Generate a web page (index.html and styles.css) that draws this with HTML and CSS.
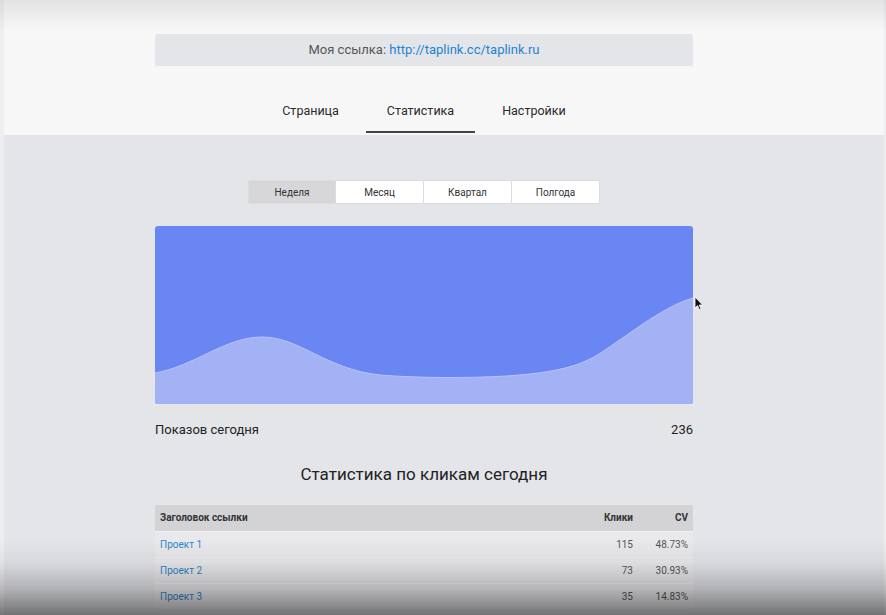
FILE: index.html
```html
<!DOCTYPE html>
<html lang="ru">
<head>
    <meta charset="UTF-8">
    <meta name="viewport" content="width=device-width, initial-scale=1.0">
    <title>Taplink — Статистика</title>
    <link rel="stylesheet" href="styles.css">
</head>
<body>
    <div class="page">
        <header class="top">
            <div class="container">
                <div class="my-link">Моя ссылка: <a href="#">http://taplink.cc/taplink.ru</a></div>
                <nav class="tabs">
                    <a class="tab" href="#">Страница</a>
                    <a class="tab active" href="#">Статистика</a>
                    <a class="tab" href="#">Настройки</a>
                </nav>
            </div>
        </header>

        <main class="stats">
            <div class="container">
                <div class="periods">
                    <button class="period active">Неделя</button>
                    <button class="period">Месяц</button>
                    <button class="period">Квартал</button>
                    <button class="period">Полгода</button>
                </div>

                <div class="chart">
                    <svg viewBox="0 0 538 178" preserveAspectRatio="none">
                        <path class="wave" d="M0,147 C40,140 70,111 107,111 C145,111 170,143 225,149 C260,152 330,153 375,148 C410,144 430,138 450,124 C480,104 510,80 538,72 L538,178 L0,178 Z"/>
                        <path class="wave-line" d="M0,147 C40,140 70,111 107,111 C145,111 170,143 225,149 C260,152 330,153 375,148 C410,144 430,138 450,124 C480,104 510,80 538,72"/>
                    </svg>
                </div>

                <div class="views">
                    <span>Показов сегодня</span>
                    <span>236</span>
                </div>

                <h2 class="clicks-title">Статистика по кликам сегодня</h2>

                <table class="clicks">
                    <thead>
                        <tr>
                            <th class="title">Заголовок ссылки</th>
                            <th class="num">Клики</th>
                            <th class="num cv">CV</th>
                        </tr>
                    </thead>
                    <tbody>
                        <tr>
                            <td><a href="#">Проект 1</a></td>
                            <td class="num">115</td>
                            <td class="num cv">48.73%</td>
                        </tr>
                        <tr>
                            <td><a href="#">Проект 2</a></td>
                            <td class="num">73</td>
                            <td class="num cv">30.93%</td>
                        </tr>
                        <tr>
                            <td><a href="#">Проект 3</a></td>
                            <td class="num">35</td>
                            <td class="num cv">14.83%</td>
                        </tr>
                    </tbody>
                </table>
            </div>
        </main>
    </div>

    <!-- mouse pointer -->
    <svg class="cursor" width="10" height="15" viewBox="0 0 10 15">
        <path d="M1,1 L1,12 L3.6,9.6 L5.4,13.8 L7,13.1 L5.3,9 L8.6,9 Z" fill="#111" stroke="#fff" stroke-width="0.8"/>
    </svg>

    <div class="shade-top"></div>
    <div class="shade-bottom"></div>
</body>
</html>
```

FILE: styles.css
```css
* {
    margin: 0;
    padding: 0;
    box-sizing: border-box;
}

body {
    font-family: Roboto, "Liberation Sans", Arial, sans-serif;
    background-color: #eeeef1;
    color: #333;
    width: 886px;
    height: 615px;
    overflow: hidden;
}

.page {
    margin: 0 2px 0 4px;
    min-height: 615px;
    background-color: #e4e5e9;
}

.container {
    width: 538px;
    margin-left: 151px;
}

/* header with link + tabs */
.top {
    background-color: #f7f7f7;
    padding-top: 34px;
    padding-bottom: 2px;
}

.my-link {
    height: 32px;
    line-height: 32px;
    background-color: #e4e5e9;
    border-radius: 2px;
    text-align: center;
    font-size: 13px;
    color: #555;
}

.my-link a {
    color: #1e84d2;
    text-decoration: none;
}

.tabs {
    display: flex;
    justify-content: center;
    gap: 6px;
    margin-top: 25px;
}

.tab {
    padding: 12px 21px;
    line-height: 16px;
    font-size: 12.5px;
    color: #2b2b2b;
    text-decoration: none;
    border-bottom: 2px solid transparent;
}

.tab.active {
    border-bottom-color: #444;
}

/* statistics */
.stats {
    padding-top: 45px;
}

.periods {
    display: flex;
    justify-content: center;
}

.period {
    width: 88px;
    height: 24px;
    font-family: inherit;
    font-size: 10px;
    color: #333;
    background-color: #fff;
    border: 1px solid #dcdcde;
    border-left: none;
}

.period:first-child {
    border-left: 1px solid #dcdcde;
    border-radius: 2px 0 0 2px;
}

.period:last-child {
    border-radius: 0 2px 2px 0;
}

.period.active {
    background-color: #d7d7d9;
}

.chart {
    margin-top: 22px;
    height: 178px;
    background-color: #6a86f2;
    border-radius: 3px;
    overflow: hidden;
}

.chart svg {
    display: block;
    width: 100%;
    height: 100%;
}

.wave {
    fill: #a3b1f5;
}

.wave-line {
    fill: none;
    stroke: #b9c3f8;
    stroke-width: 1;
}

.views {
    display: flex;
    justify-content: space-between;
    margin-top: 18px;
    line-height: 16px;
    font-size: 13px;
    color: #222;
}

.clicks-title {
    margin-top: 25px;
    line-height: 22px;
    font-size: 17px;
    font-weight: 400;
    text-align: center;
    color: #222;
}

.clicks {
    width: 100%;
    margin-top: 20px;
    border-collapse: collapse;
    font-size: 10px;
}

.clicks th,
.clicks td {
    height: 26px;
    padding: 0 5px;
    text-align: left;
}

.clicks th {
    background-color: #d3d3d6;
    font-weight: 700;
    color: #333;
}

.clicks td {
    background-color: #e9e9ec;
    border-top: 1px solid #f1f1f3;
    color: #555;
}

.clicks .num {
    text-align: right;
    width: 60px;
}

.clicks .cv {
    width: 55px;
}

.clicks a {
    color: #2e86cc;
    text-decoration: none;
}

/* overlays */
.cursor {
    position: absolute;
    left: 694px;
    top: 296px;
}

.shade-top {
    position: fixed;
    left: 0;
    top: 0;
    width: 100%;
    height: 30px;
    background: linear-gradient(to bottom, rgba(0, 0, 0, 0.08), rgba(0, 0, 0, 0));
    pointer-events: none;
}

.shade-bottom {
    position: fixed;
    left: 0;
    bottom: 0;
    width: 100%;
    height: 75px;
    background: linear-gradient(to bottom, rgba(0, 0, 0, 0) 0%, rgba(0, 0, 0, 0.05) 30%, rgba(0, 0, 0, 0.22) 65%, rgba(0, 0, 0, 0.5) 100%);
    pointer-events: none;
}
```
